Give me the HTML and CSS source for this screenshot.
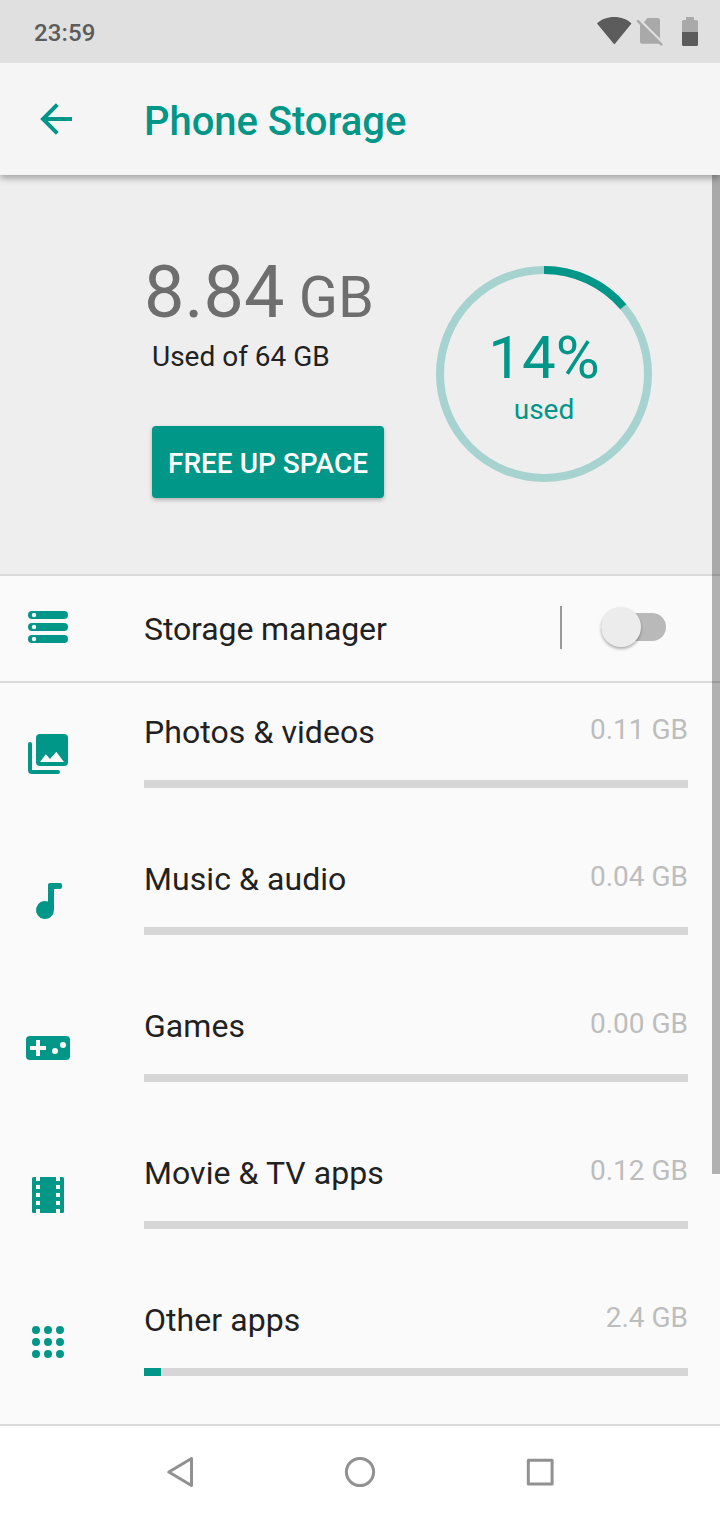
FILE: index.html
```html
<!DOCTYPE html>
<html lang="en">
  <head>
    <meta charset="UTF-8" />
    <meta name="viewport" content="width=device-width, initial-scale=1.0" />
    <title>Phone Storage</title>
    <link rel="stylesheet" href="styles.css">
  </head>
  <body>
    <div class="screen">
      <!-- Status bar -->
      <div class="status-bar">
        <span class="clock">23:59</span>
        <svg class="status-icons" width="104" height="32" viewBox="0 0 104 32">
          <path fill="#5c5c5c" d="M1 9.5C5 5.200 11.500 3 18.300 3s13.200 2.200 17.200 6.500L19.200 29.400a1 1 0 0 1-1.700 0z" />
          <path fill="#a9a9a9" d="M51.500 4H61.500a2.500 2.500 0 0 1 2.500 2.500V24.500L47.800 8.300zM44 9 64 29.200a2 2 0 0 1-1.500.600H46a2 2 0 0 1-2-2z" />
          <path stroke="#a9a9a9" stroke-width="2.500" stroke-linecap="round" d="M42 7.200 65.300 30.400" />
          <path fill="#a9a9a9" d="M90 3h8v3h2.500a1.500 1.500 0 0 1 1.500 1.500V18H86V7.500A1.500 1.500 0 0 1 87.500 6H90z" />
          <path fill="#5c5c5c" d="M86 18h16v12.500a1.500 1.500 0 0 1-1.500 1.500h-13a1.500 1.500 0 0 1-1.500-1.500z" />
        </svg>
      </div>

      <!-- App bar -->
      <div class="app-bar">
        <svg class="back" width="32" height="32" viewBox="0 0 32 32">
          <path fill="none" stroke="#009688" stroke-width="4" d="M32 16H3M17.300 1.700 3 16l14.300 14.300" />
        </svg>
        <h1>Phone Storage</h1>
      </div>

      <div class="content">
        <div class="summary">
          <div class="usage">
            <div class="amount">8.84<span class="unit"> GB</span></div>
            <div class="total">Used of 64 GB</div>
            <button class="free-button">FREE UP SPACE</button>
          </div>
          <div class="donut">
            <svg class="ring" width="216" height="216" viewBox="0 0 216 216">
              <circle class="ring-track" cx="108" cy="108" r="104" />
              <circle class="ring-value" cx="108" cy="108" r="104" pathLength="100" stroke-dasharray="13.800 100" transform="rotate(-90 108 108)" />
            </svg>
            <div class="percent">14%</div>
            <div class="percent-label">used</div>
          </div>
        </div>

        <div class="manager">
          <svg class="icon" viewBox="0 0 48 48">
            <rect x="4" y="8" width="40" height="8" rx="4" />
            <rect x="4" y="20" width="40" height="8" rx="4" />
            <rect x="4" y="32" width="40" height="8" rx="4" />
            <g class="hole">
              <circle cx="10" cy="12" r="2.200" />
              <circle cx="10" cy="24" r="2.200" />
              <circle cx="10" cy="36" r="2.200" />
            </g>
          </svg>
          <span class="label">Storage manager</span>
          <span class="divider"></span>
          <span class="switch"><span class="thumb"></span></span>
        </div>

        <!-- Categories -->
        <div class="row">
          <svg class="icon" viewBox="0 0 48 48">
            <rect x="12" y="4" width="32" height="32" rx="4" />
            <path d="M4 14a2 2 0 0 1 4 0v26h26a2 2 0 0 1 0 4H8a4 4 0 0 1-4-4z" />
            <path class="hole" d="M16 32l5.800-7.700L26 29l6.300-7.200L40 32z" />
          </svg>
          <div class="details">
            <div class="line"><span class="label">Photos &amp; videos</span><span class="size">0.11 GB</span></div>
            <div class="bar"></div>
          </div>
        </div>

        <div class="row">
          <svg class="icon" viewBox="0 0 48 48">
            <path d="M24 8a2 2 0 0 1 2-2h10a2 2 0 0 1 2 2v2a2 2 0 0 1-2 2h-6v21a9 9 0 1 1-6-8.500z" />
          </svg>
          <div class="details">
            <div class="line"><span class="label">Music &amp; audio</span><span class="size">0.04 GB</span></div>
            <div class="bar"></div>
          </div>
        </div>

        <div class="row">
          <svg class="icon" viewBox="0 0 48 48">
            <rect x="2" y="12" width="44" height="24" rx="4" />
            <g class="hole">
              <path d="M12 16h4v6h6v4h-6v6h-4v-6H6v-4h6z" />
              <circle cx="31" cy="27" r="3" />
              <circle cx="39" cy="21" r="3" />
            </g>
          </svg>
          <div class="details">
            <div class="line"><span class="label">Games</span><span class="size">0.00 GB</span></div>
            <div class="bar"></div>
          </div>
        </div>

        <div class="row">
          <svg class="icon" viewBox="0 0 48 48">
            <rect x="8" y="6" width="32" height="36" rx="1.500" />
            <path class="hole" d="M12 6h4v4h-4zM12 14h4v4h-4zM12 22h4v4h-4zM12 30h4v4h-4zM12 38h4v4h-4zM32 6h4v4h-4zM32 14h4v4h-4zM32 22h4v4h-4zM32 30h4v4h-4zM32 38h4v4h-4z" />
          </svg>
          <div class="details">
            <div class="line"><span class="label">Movie &amp; TV apps</span><span class="size">0.12 GB</span></div>
            <div class="bar"></div>
          </div>
        </div>

        <div class="row">
          <svg class="icon" viewBox="0 0 48 48">
            <circle cx="12" cy="12" r="4" />
            <circle cx="24" cy="12" r="4" />
            <circle cx="36" cy="12" r="4" />
            <circle cx="12" cy="24" r="4" />
            <circle cx="24" cy="24" r="4" />
            <circle cx="36" cy="24" r="4" />
            <circle cx="12" cy="36" r="4" />
            <circle cx="24" cy="36" r="4" />
            <circle cx="36" cy="36" r="4" />
          </svg>
          <div class="details">
            <div class="line"><span class="label">Other apps</span><span class="size">2.4 GB</span></div>
            <div class="bar"><div class="bar-fill" style="width: 17px"></div></div>
          </div>
        </div>

        <div class="scrollbar"></div>
      </div>

      <!-- Navigation bar -->
      <div class="nav-bar">
        <svg width="40" height="40" viewBox="0 0 40 40">
          <path d="M31.500 6.500v27L8.800 20z" />
        </svg>
        <svg width="40" height="40" viewBox="0 0 40 40">
          <circle cx="20" cy="20" r="13.600" />
        </svg>
        <svg width="40" height="40" viewBox="0 0 40 40">
          <rect x="8.300" y="8.300" width="23.800" height="23.800" />
        </svg>
      </div>
    </div>
  </body>
</html>
```

FILE: styles.css
```css
* {
  box-sizing: border-box;
}

body {
  margin: 0;
  font-family: Roboto, "Liberation Sans", sans-serif;
  background: #fafafa;
  color: #212121;
}

.screen {
  width: 720px;
  height: 1520px;
  display: flex;
  flex-direction: column;
  overflow: hidden;
}

.status-bar {
  height: 63px;
  flex: none;
  display: flex;
  justify-content: space-between;
  padding: 14px 20px 0 34px;
  background: #e0e0e0;
  position: relative;
  z-index: 2;
}

.clock {
  font-size: 24px;
  font-weight: 500;
  line-height: 38px;
  letter-spacing: 0.15px;
  color: #5c5c5c;
}

.app-bar {
  height: 112px;
  flex: none;
  display: flex;
  align-items: center;
  gap: 72px;
  padding-left: 40px;
  background: #f5f5f5;
  box-shadow: 0 3px 7px rgba(0, 0, 0, 0.34);
  position: relative;
  z-index: 1;
}

.app-bar h1 {
  margin: 0;
  padding-top: 4px;
  font-size: 40px;
  font-weight: 500;
  letter-spacing: -0.05px;
  color: #009688;
}

.content {
  flex: 1;
  position: relative;
  overflow: hidden;
}

.summary {
  height: 401px;
  display: flex;
  justify-content: space-between;
  padding: 81px 68px 0 144px;
  background: #eeeeee;
  border-bottom: 2px solid #dadada;
}

.amount {
  height: 74px;
  font-size: 72px;
  line-height: 74px;
  color: #6e6e6e;
  white-space: nowrap;
}

.unit {
  font-size: 57.6px;
  line-height: 1;
}

.total {
  margin: 11px 0 0 8px;
  font-size: 28px;
  line-height: 32px;
}

.free-button {
  display: block;
  width: 232px;
  height: 72px;
  margin: 53px 0 0 8px;
  padding: 3px 0 0;
  border: none;
  border-radius: 4px;
  background: #009688;
  color: #ffffff;
  font-family: inherit;
  font-size: 28px;
  font-weight: 500;
  white-space: nowrap;
  box-shadow: 0 2px 4px rgba(0, 0, 0, 0.26);
}

.donut {
  position: relative;
  width: 216px;
  height: 216px;
  margin-top: 10px;
  padding-top: 62px;
  text-align: center;
  color: #009688;
}

.ring {
  position: absolute;
  top: 0;
  left: 0;
}

.ring circle {
  fill: none;
  stroke-width: 8;
}

.ring-track {
  stroke: #a6d3cf;
}

.ring-value {
  stroke: #009688;
}

.percent {
  font-size: 60px;
  line-height: 60px;
}

.percent-label {
  margin-top: 6px;
  font-size: 28px;
  line-height: 32px;
}

.manager {
  height: 107px;
  display: flex;
  align-items: center;
  padding: 0 54px 0 24px;
  border-bottom: 2px solid #dadada;
}

.icon {
  width: 48px;
  height: 48px;
  flex: none;
  fill: #009688;
}

.manager .icon {
  margin: -3px 72px 0 0;
}

.manager .label {
  letter-spacing: -0.1px;
}

.hole {
  fill: #fafafa;
}

.label {
  font-size: 32px;
  line-height: 40px;
  letter-spacing: 0.07px;
}

.divider {
  width: 2px;
  height: 43px;
  margin: -2px 39px 0 auto;
  background: #999999;
}

.switch {
  width: 65px;
  height: 28px;
  margin-top: -3px;
  display: flex;
  align-items: center;
  border-radius: 14px;
  background: #b9b9b9;
}

.thumb {
  width: 40px;
  height: 40px;
  flex: none;
  border-radius: 50%;
  background: #ececec;
  box-shadow: 0 2px 3px rgba(0, 0, 0, 0.3);
}

.row {
  height: 147px;
  display: flex;
  gap: 72px;
  padding: 0 32px 0 24px;
}

.row .icon {
  margin-top: 47px;
}

.details {
  flex: 1;
  padding-top: 29px;
}

.line {
  height: 68px;
  display: flex;
  justify-content: space-between;
}

.size {
  font-size: 28px;
  line-height: 35px;
  color: #bdbdbd;
}

.bar {
  height: 8px;
  background: #d6d6d6;
}

.bar-fill {
  height: 100%;
  background: #009688;
}

.scrollbar {
  position: absolute;
  top: 0;
  right: 0;
  width: 8px;
  height: 999px;
  background: rgba(0, 0, 0, 0.29);
}

.nav-bar {
  height: 96px;
  flex: none;
  display: flex;
  justify-content: center;
  gap: 140px;
  padding-top: 26px;
  background: #ffffff;
  border-top: 2px solid #dadada;
}

.nav-bar svg {
  fill: none;
  stroke: #919191;
  stroke-width: 3;
  stroke-linejoin: round;
}
```
